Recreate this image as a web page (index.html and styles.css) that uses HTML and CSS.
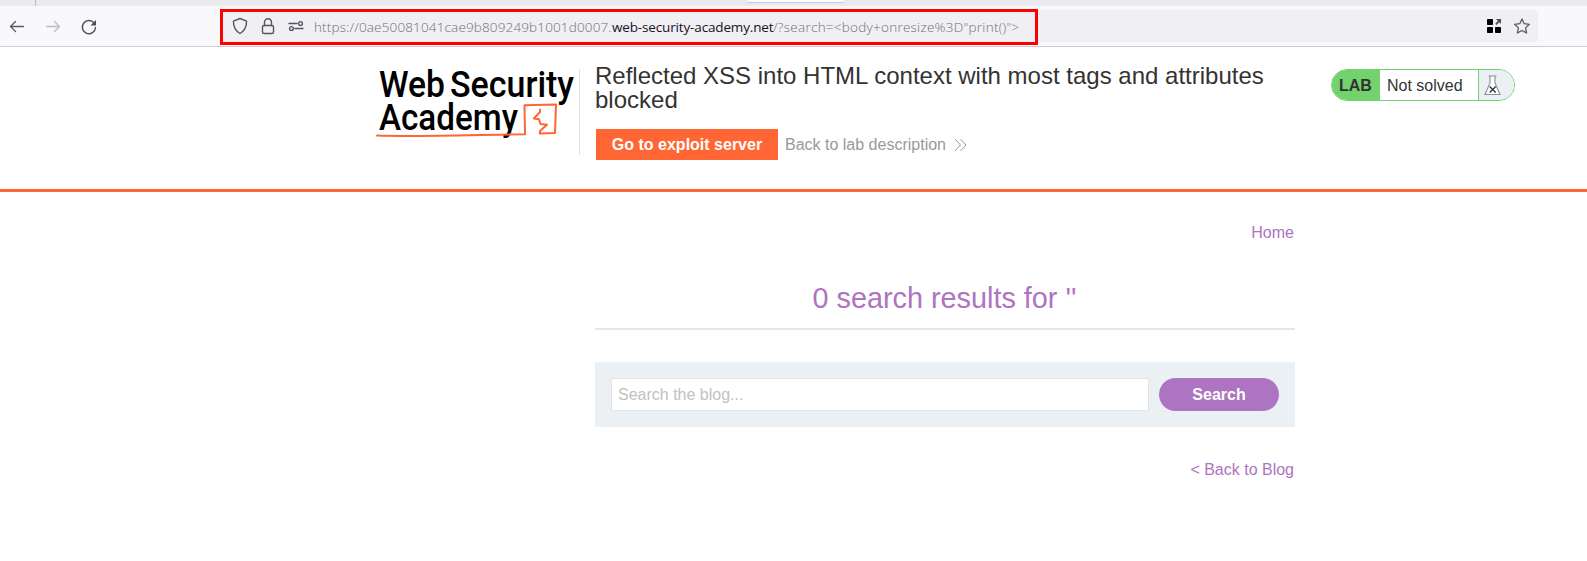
FILE: index.html
```html
<!DOCTYPE html>
<html lang="en">
<head>
<meta charset="utf-8">
<title>Reflected XSS into HTML context with most tags and attributes blocked</title>
<link rel="stylesheet" href="styles.css">
</head>
<body>
<div class="tabstrip"><div class="tab-edge"></div><div class="tab-hint"></div></div>
<div class="toolbar">
  <svg class="nav-icons" width="110" height="40" viewBox="0 6 110 40" fill="none" stroke-width="1.4" stroke-linecap="round" stroke-linejoin="round">
    <path stroke="#5b5b66" d="M10.500 26.500H23.500M15.500 21.500l-5 5 5 5"/>
    <path stroke="#bdbdc3" d="M46.500 26.500H59.500M54.500 21.500l5 5-5 5"/>
    <path stroke="#4d4d57" d="M94.200 23.200A6.600 6.600 0 1 0 95.500 27.500"/>
    <path fill="#4d4d57" stroke="none" d="M96 20v5.500h-5.500z"/>
  </svg>
  <div class="urlbar">
    <svg class="url-icons" width="80" height="32" viewBox="225 10 80 32" fill="none" stroke="#55555f" stroke-width="1.4" stroke-linecap="round" stroke-linejoin="round">
      <path d="M240 18.500l6.600 2.600c0 6-2 10-6.600 12.400c-4.600-2.400-6.600-6.400-6.600-12.400z"/>
      <rect x="262.500" y="25.500" width="11" height="8" rx="1.500"/>
      <path d="M264.500 25.500v-3.300a3.500 3.500 0 0 1 7 0v3.300"/>
      <path d="M289 23.500h8M295 28.500h8"/>
      <circle cx="300.500" cy="23.500" r="1.900"/><circle cx="291.500" cy="28.500" r="1.900"/>
    </svg>
    <div class="url"><span class="sub">https://0ae50081041cae9b809249b1001d0007.</span><span class="domain">web-security-academy.net</span><span class="query">/?search=&lt;body+onresize%3D"print()"&gt;</span></div>
    <svg class="end-icons" width="50" height="32" viewBox="1484 10 50 32">
      <rect x="1487" y="19" width="6" height="6" rx=".8"/><rect x="1487" y="27" width="6" height="6" rx=".8"/><rect x="1495" y="27" width="6" height="6" rx=".8"/>
      <path fill="#4d4d57" d="M1496 19h5v5l-1.700-1.700-2.800 2.800-1.300-1.300 2.700-2.700z"/>
      <path fill="none" stroke="#5b5b66" stroke-width="1.300" stroke-linejoin="round" d="M1522 19l2.200 4.700 5.200.6-3.800 3.600 1 5.100-4.600-2.500-4.600 2.500 1-5.100-3.800-3.600 5.200-.6z"/>
    </svg>
    <div class="highlight"></div>
  </div>
</div>
<header class="lab-header">
  <svg class="logo" width="204" height="92" viewBox="375 63 204 92">
    <g class="logo-text">
      <text x="379" y="97" textLength="66" lengthAdjust="spacingAndGlyphs">Web</text>
      <text x="450" y="97" textLength="124" lengthAdjust="spacingAndGlyphs">Security</text>
      <text x="379" y="129.500" textLength="139" lengthAdjust="spacingAndGlyphs">Academy</text>
    </g>
    <g fill="none" stroke="#ff6633" stroke-width="2" stroke-linecap="round" stroke-linejoin="round">
      <path d="M377 135.600C410 136.800 460 135 525 134.200L524.500 105.200L556 104.500L555 133L539.800 133.500L540 131L547 124.800L540.500 124L539 119.200L533.800 118.500L540 112V109.500"/>
    </g>
  </svg>
  <div class="title">
    <h2>Reflected XSS into HTML context with most tags and attributes blocked</h2>
    <div class="actions">
      <a class="exploit">Go to exploit server</a>
      <a class="back">Back to lab description</a>
      <svg width="13" height="14" viewBox="0 0 13 14" fill="none" stroke="#999" stroke-width="1"><path d="M1 1l5.500 6L1 13M6.500 1l5.500 6-5.500 6"/></svg>
    </div>
  </div>
  <div class="status">
    <span class="lab">LAB</span>
    <span class="state">Not solved</span>
    <span class="flask"><svg width="17" height="21" viewBox="0 0 17 21" fill="none"><path d="M4.500 1h8M6 1v7L1 19.500h15L11 8V1" fill="#fff" stroke="#8b9094" stroke-width="1.100"/><path d="M5.700 11.500l6 6M11.700 11.500l-6 6" stroke="#333332" stroke-width="1.300"/></svg></span>
  </div>
</header>
<main class="content">
  <nav><a>Home</a></nav>
  <h1>0 search results for ''</h1>
  <form class="search">
    <input type="text" placeholder="Search the blog...">
    <button type="button">Search</button>
  </form>
  <a class="blog-link">&lt; Back to Blog</a>
</main>
</body>
</html>
```
FILE: styles.css
```css
* { box-sizing: border-box; }
body { margin: 0; height: 561px; overflow: hidden; background: #fff; color: #333332; font-family: "Liberation Sans", Arial, sans-serif; font-size: 16px; }
svg { display: block; flex: none; }

.tabstrip { display: flex; height: 6px; background: #eae9ee; }
.tab-edge { width: 36px; border-right: 1px solid #b9b9c0; }
.tab-hint { width: 97px; height: 2px; margin-left: 711px; background: #fafafc; border-radius: 0 0 3px 3px; box-shadow: 0 1px 1px #c9c9cf; }

.toolbar { display: flex; height: 41px; padding-top: 4px; background: #f9f9fb; border-bottom: 1px solid #ccccd1; }
.nav-icons { margin-top: -4px; }
.urlbar { position: relative; display: flex; align-items: center; width: 1316px; height: 32px; margin-left: 112px; background: #f0eff4; border-radius: 4px; }
.url-icons { margin-left: 3px; }
.url { display: flex; flex: 1; margin-left: 9px; padding-top: 1px; font-family: "Open Sans", "Noto Sans", sans-serif; font-size: 13.500px; font-weight: 300; line-height: 20px; color: #6f6f76; white-space: nowrap; }
.url .sub { width: 298px; letter-spacing: .15px; }
.url .domain { width: 161px; letter-spacing: -.15px; color: #15141a; font-weight: 400; }
.url .query { letter-spacing: .26px; }
.end-icons { margin-right: 4px; }
.highlight { position: absolute; left: -2px; top: -1px; width: 818px; height: 36px; border: 3px solid #fe0000; }

.lab-header { display: flex; align-items: flex-start; height: 145px; padding: 22px 0 0 375px; border-bottom: 3px solid #ff6633; }
.logo { margin-top: -6px; }
.logo-text { font-family: Roboto, sans-serif; font-size: 37.500px; font-weight: 500; fill: #000; }
.title { width: 735px; height: 86px; padding-left: 16px; border-left: 1px solid #dfdfdf; }
.title h2 { width: 700px; margin: -5px 0 0 -1px; font-size: 24px; font-weight: 400; line-height: 24px; }
.actions { display: flex; align-items: center; height: 31px; margin-top: 17px; }
.exploit { width: 182px; height: 31px; background: #ff6633; color: #fff; font-weight: 700; line-height: 31px; text-align: center; }
.back { margin: 0 8px 0 7px; color: #999; }
.status { display: flex; width: 184px; height: 32px; margin-left: 17px; border: 1px solid #72d26d; border-radius: 16px; overflow: hidden; line-height: 32px; }
.lab { width: 48px; padding-left: 7px; background: #72d26d; font-weight: 700; }
.state { width: 98px; padding-left: 7px; }
.flask { flex: 1; padding: 5px 0 0 5px; background: #eaf0f3; border-left: 1px solid #72d26d; }

.content { display: flex; flex-direction: column; width: 700px; margin-left: 595px; padding-top: 32px; color: #ad74c1; }
nav { padding-right: 1px; line-height: 18px; text-align: right; }
h1 { height: 62px; margin: 26px 0 0; padding: 12px 1px 0 0; border-bottom: 2px solid #e6e6e6; font-size: 28.800px; font-weight: 400; line-height: 36px; text-align: center; }
.search { display: flex; gap: 10px; height: 65px; margin-top: 32px; padding: 16px; background: #eaf0f3; }
.search input { flex: 1; min-width: 0; height: 33px; padding: 0 6px; border: 1px solid #e4e4e4; font: 16px "Liberation Sans", Arial, sans-serif; }
.search input::placeholder { color: #c2c2c2; }
.search button { width: 120px; height: 33px; padding: 0; border: 0; border-radius: 17px; background: #ad74c1; color: #fff; font: 700 16px "Liberation Sans", Arial, sans-serif; }
.blog-link { align-self: flex-end; margin: 34px 1px 0 0; line-height: 18px; }
```
